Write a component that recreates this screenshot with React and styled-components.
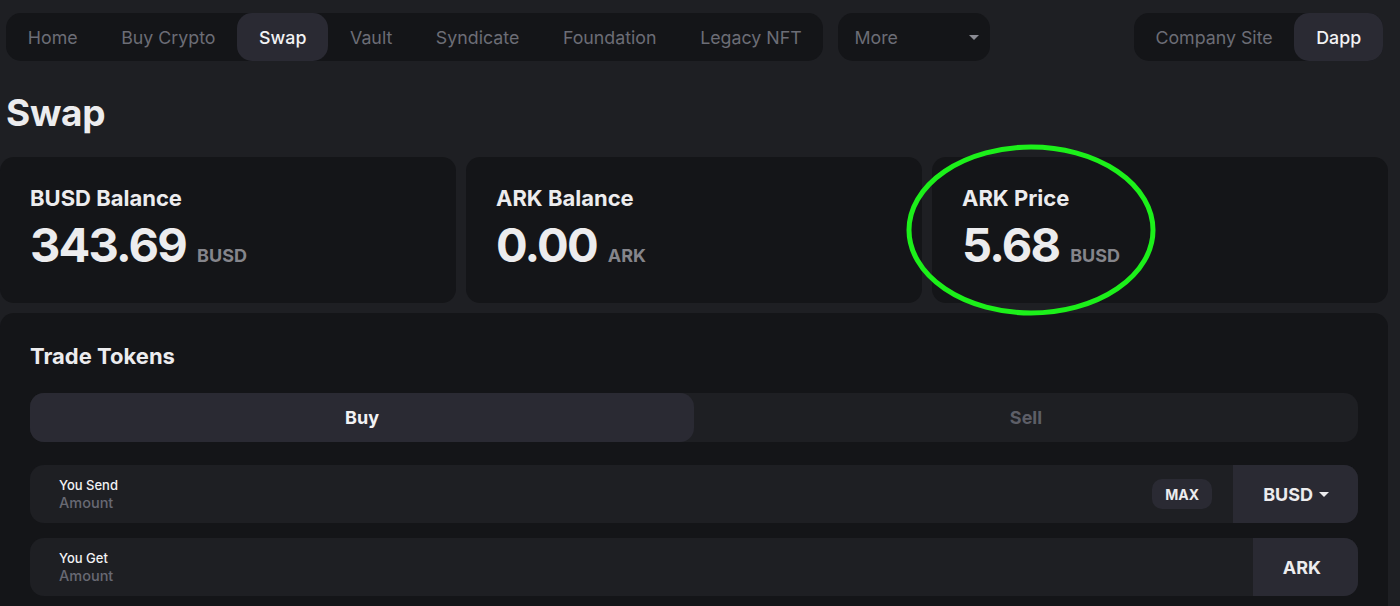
import styled, { createGlobalStyle } from 'styled-components';

const GlobalStyle = createGlobalStyle`
  html, body {
    margin: 0;
    padding: 0;
    background: #1e1f23;
    font-family: Inter, "Noto Sans", sans-serif;
    color: #ececee;
  }
  * { box-sizing: border-box; }
`;

const NAV_ITEMS = ['Home', 'Buy Crypto', 'Swap', 'Vault', 'Syndicate', 'Foundation', 'Legacy NFT'];

const STATS = [
  { title: 'BUSD Balance', value: '343.69', unit: 'BUSD' },
  { title: 'ARK Balance', value: '0.00', unit: 'ARK' },
  { title: 'ARK Price', value: '5.68', unit: 'BUSD' },
];

const Caret = ({ color = '#8a8b93' }) => (
  <svg width="10" height="5" viewBox="0 0 10 5">
    <path d="M0 0 L10 0 L5 5 Z" fill={color} />
  </svg>
);

const App = () => {
  return (
    <Page>
      <GlobalStyle />
      <TopBar>
        <NavGroup>
          {NAV_ITEMS.map((item) => (
            <NavItem key={item} $active={item === 'Swap'}>
              {item}
            </NavItem>
          ))}
        </NavGroup>
        <MoreSelect>
          <span>More</span>
          <Caret />
        </MoreSelect>
        <Spacer />
        <NavGroup>
          <NavItem>Company Site</NavItem>
          <NavItem $active>Dapp</NavItem>
        </NavGroup>
      </TopBar>

      <Heading>Swap</Heading>

      <StatsRow>
        {STATS.map((s) => (
          <StatCard key={s.title}>
            <CardTitle>{s.title}</CardTitle>
            <ValueLine>
              <Value>{s.value}</Value>
              <Unit>{s.unit}</Unit>
            </ValueLine>
          </StatCard>
        ))}
        <Highlight width="256" height="176" viewBox="0 0 256 176">
          <ellipse cx="128" cy="88" rx="122" ry="83" fill="none" stroke="#1cf01a" strokeWidth="5" />
        </Highlight>
      </StatsRow>

      <TradePanel>
        <CardTitle>Trade Tokens</CardTitle>
        <Tabs>
          <Tab $active>Buy</Tab>
          <Tab>Sell</Tab>
        </Tabs>
        <InputRow>
          <Field>
            <FieldLabel>You Send</FieldLabel>
            <FieldPlaceholder>Amount</FieldPlaceholder>
          </Field>
          <MaxButton>MAX</MaxButton>
          <TokenBox>
            BUSD
            <Caret color="#ececee" />
          </TokenBox>
        </InputRow>
        <InputRow $gap="15px">
          <Field>
            <FieldLabel>You Get</FieldLabel>
            <FieldPlaceholder>Amount</FieldPlaceholder>
          </Field>
          <TokenBox $padRight="37px">ARK</TokenBox>
        </InputRow>
      </TradePanel>
    </Page>
  );
};

export default App;

const Page = styled.div`
  width: 1400px;
  height: 606px;
  overflow: hidden;
  padding: 13px 12px 0 0;
`;

const TopBar = styled.div`
  display: flex;
  align-items: center;
  gap: 15px;
  padding: 0 5px 0 6px;
`;

const Spacer = styled.div`
  flex: 1;
`;

const NavGroup = styled.nav`
  display: flex;
  align-items: center;
  height: 48px;
  background: #141518;
  border-radius: 15px;
`;

const NavItem = styled.div`
  height: 48px;
  display: flex;
  align-items: center;
  padding: 0 21.8px;
  border-radius: 15px;
  font-size: 17.8px;
  font-weight: ${(p) => (p.$active ? 500 : 400)};
  color: ${(p) => (p.$active ? '#f2f2f4' : '#6c6d76')};
  background: ${(p) => (p.$active ? '#2a2a33' : 'transparent')};
`;

const MoreSelect = styled.div`
  width: 152px;
  height: 48px;
  display: flex;
  align-items: center;
  justify-content: space-between;
  padding: 0 11px 0 16px;
  background: #141518;
  border-radius: 15px;
  font-size: 17.8px;
  color: #6c6d76;
`;

const Heading = styled.h1`
  margin: 29px 0 0 6px;
  font-size: 37px;
  line-height: 46px;
  font-weight: 700;
  letter-spacing: -0.3px;
  color: #ececee;
`;

const StatsRow = styled.div`
  position: relative;
  display: grid;
  grid-template-columns: repeat(3, 1fr);
  gap: 10px;
  margin-top: 21px;
`;

const StatCard = styled.div`
  height: 146px;
  padding: 28px 30px 0;
  background: #141518;
  border-radius: 14px;
`;

const CardTitle = styled.div`
  font-size: 22px;
  line-height: 1.2;
  font-weight: 700;
  color: #ececee;
`;

const ValueLine = styled.div`
  display: flex;
  align-items: baseline;
  gap: 11px;
  margin-top: 8px;
`;

const Value = styled.span`
  font-size: 47px;
  line-height: 1.1;
  font-weight: 700;
  letter-spacing: -1.8px;
  color: #ececee;
`;

const Unit = styled.span`
  font-size: 18px;
  font-weight: 700;
  color: #85858b;
`;

const Highlight = styled.svg`
  position: absolute;
  left: 903px;
  top: -15px;
  pointer-events: none;
`;

const TradePanel = styled.section`
  margin-top: 10px;
  padding: 30px 30px 0;
  height: 320px;
  background: #141518;
  border-radius: 14px;
`;

const Tabs = styled.div`
  display: grid;
  grid-template-columns: 1fr 1fr;
  margin-top: 24px;
  background: #1e1f23;
  border-radius: 14px;
`;

const Tab = styled.div`
  height: 49px;
  display: flex;
  align-items: center;
  justify-content: center;
  border-radius: 14px;
  font-size: 18px;
  font-weight: 700;
  color: ${(p) => (p.$active ? '#f2f2f4' : '#5d5e67')};
  background: ${(p) => (p.$active ? '#2a2a33' : 'transparent')};
`;

const InputRow = styled.div`
  display: flex;
  align-items: center;
  height: 58px;
  margin-top: ${(p) => p.$gap || '23px'};
  background: #1e1f23;
  border-radius: 14px;
  overflow: hidden;
`;

const Field = styled.div`
  flex: 1;
  padding-left: 29px;
  display: flex;
  flex-direction: column;
  gap: 1px;
`;

const FieldLabel = styled.div`
  font-size: 13px;
  font-weight: 500;
  color: #f2f2f4;
`;

const FieldPlaceholder = styled.div`
  font-size: 14.5px;
  font-weight: 500;
  color: #686973;
`;

const MaxButton = styled.div`
  width: 60px;
  height: 30px;
  display: flex;
  align-items: center;
  justify-content: center;
  margin-right: 21px;
  background: #2a2a33;
  border-radius: 10px;
  font-size: 14px;
  font-weight: 700;
  color: #ececee;
`;

const TokenBox = styled.div`
  height: 100%;
  display: flex;
  align-items: center;
  gap: 6px;
  padding: 0 ${(p) => p.$padRight || '29px'} 0 30px;
  background: #2a2a33;
  font-size: 18px;
  font-weight: 700;
  color: #ececee;
`;
